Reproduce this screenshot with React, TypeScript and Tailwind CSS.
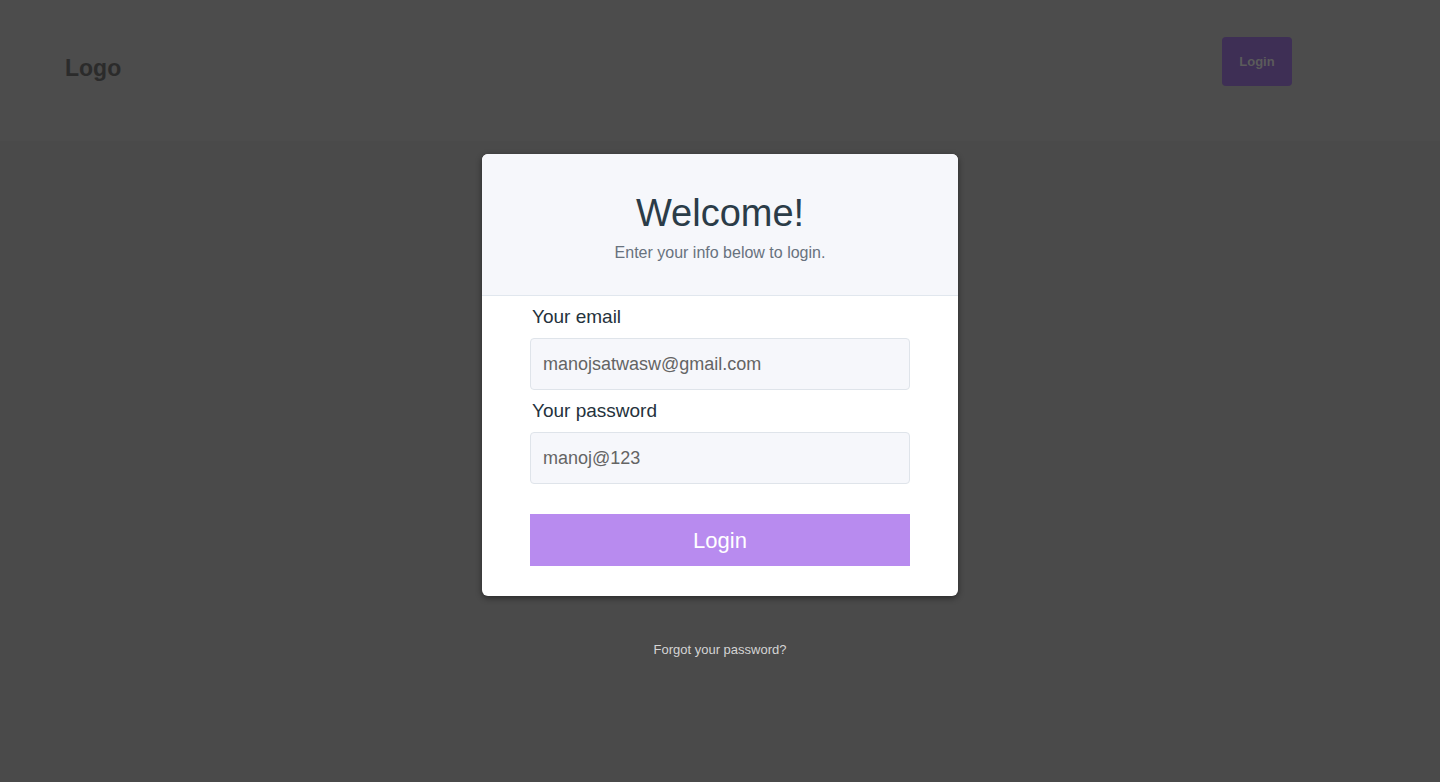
import React, { useState } from 'react';

export default function App() {
  const [email, setEmail] = useState('manojsatwasw@gmail.com');
  const [password, setPassword] = useState('manoj@123');

  return (
    <div className="min-h-screen bg-[#4a4a4a] font-['Liberation_Sans',Arial,sans-serif]">
      <header className="h-[141px] bg-[#4c4c4c] flex items-start justify-between pl-[65px] pr-[148px]">
        <div className="mt-[51px] text-[23px] font-bold text-[#2b2b2b]">Logo</div>
        <button className="mt-[37px] w-[70px] h-[49px] rounded-[4px] bg-[#3e2f55] text-[#5b5b5b] text-[13px] font-bold">
          Login
        </button>
      </header>

      <div className="flex flex-col items-center">
        <div className="mt-[13px] w-[476px] rounded-[6px] bg-white shadow-[0_2px_6px_rgba(0,0,0,0.45)] overflow-hidden">
          <div className="h-[142px] bg-[#f6f7fb] border-b border-[#e1e7ee] flex flex-col items-center pt-[36px]">
            <h1 className="text-[38px] leading-[46px] text-[#2b3c48]">Welcome!</h1>
            <p className="mt-[5px] text-[16px] text-[#68727e]">Enter your info below to login.</p>
          </div>
          <form
            className="px-[48px] pt-[9px] pb-[30px]"
            onSubmit={(e) => e.preventDefault()}
          >
            <label className="block pl-[2px] text-[19px] leading-[24px] text-[#25323c]">Your email</label>
            <input
              type="email"
              value={email}
              onChange={(e) => setEmail(e.target.value)}
              className="mt-[9px] block w-full h-[52px] rounded-[4px] border border-[#dfe4ea] bg-[#f6f7fb] px-[12px] text-[18px] text-[#646464] outline-none"
            />
            <label className="block mt-[9px] pl-[2px] text-[19px] leading-[24px] text-[#25323c]">Your password</label>
            <input
              type="text"
              value={password}
              onChange={(e) => setPassword(e.target.value)}
              className="mt-[9px] block w-full h-[52px] rounded-[4px] border border-[#dfe4ea] bg-[#f6f7fb] px-[12px] text-[18px] text-[#646464] outline-none"
            />
            <button
              type="submit"
              className="mt-[30px] w-full h-[52px] bg-[#b88bef] text-white text-[22px]"
            >
              Login
            </button>
          </form>
        </div>
        <a href="#" className="mt-[44px] text-[13px] text-[#d4d4d4]">Forgot your password?</a>
      </div>
    </div>
  );
}
